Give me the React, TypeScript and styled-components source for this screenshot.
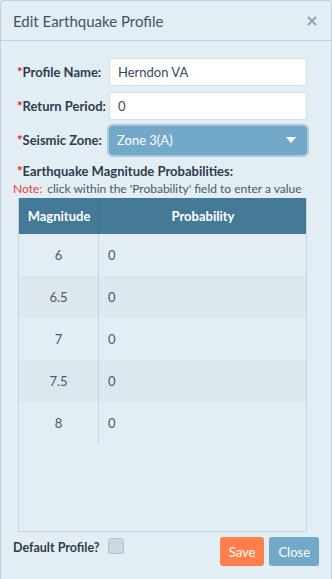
import React from 'react';
import styled, { createGlobalStyle } from 'styled-components';

const GlobalStyle = createGlobalStyle`
  body {
    margin: 0;
    font-family: Lato, 'Liberation Sans', sans-serif;
    background: #e3edf4;
  }
`;

const Dialog = styled.div`
  box-sizing: border-box;
  width: 332px;
  height: 579px;
  background: #e3edf4;
  border: 1px solid #c3d0d9;
  border-bottom: none;
  border-radius: 4px 4px 0 0;
  display: flex;
  flex-direction: column;
  color: #34495e;
`;

const Header = styled.div`
  height: 39px;
  display: flex;
  align-items: center;
  justify-content: space-between;
  padding: 0 12px 0 12px;
  border-bottom: 1px solid #c3d0d9;
`;

const Title = styled.h4`
  margin: 0;
  font-size: 15px;
  font-weight: 400;
  color: #3e5366;
`;

const CloseX = styled.button`
  border: none;
  background: none;
  padding: 0;
  width: 14px;
  height: 14px;
  display: flex;
  cursor: pointer;
`;

const Body = styled.div`
  flex: 1;
  display: flex;
  flex-direction: column;
  padding: 17px 24px 0 16px;
`;

const FieldRow = styled.div`
  display: flex;
  align-items: center;
  height: 28px;
  margin-bottom: 6px;
`;

const Label = styled.label`
  width: 92px;
  font-size: 13px;
  font-weight: 700;
  color: #2e3d4c;
  white-space: nowrap;
`;

const Star = styled.span`
  color: #e02020;
`;

const TextInput = styled.input`
  box-sizing: border-box;
  flex: 1;
  height: 28px;
  border: 1px solid #d6e0e6;
  border-radius: 3px;
  background: #fff;
  padding: 0 8px;
  font-family: inherit;
  font-size: 13px;
  color: #34495e;
`;

const Select = styled.div`
  box-sizing: border-box;
  flex: 1;
  height: 29px;
  border-radius: 4px;
  background: #73a9c8;
  box-shadow: 0 0 0 2px #a8c9dc;
  display: flex;
  align-items: center;
  justify-content: space-between;
  padding: 0 11px 0 8px;
  color: #fff;
  font-size: 13px;
`;

const Section = styled.div`
  margin-top: 3px;
  font-size: 13px;
  font-weight: 700;
  color: #2e3d4c;
`;

const Note = styled.div`
  font-size: 12px;
  color: #4a5a68;
  margin: 2px 0 0 -4px;
  white-space: nowrap;
`;

const NoteLabel = styled.span`
  color: #f03c3c;
  margin-right: 5px;
`;

const TableBox = styled.div`
  margin: 2px 0 0 1px;
  height: 333px;
  border: 1px solid #c8d5de;
  border-top: none;
  display: flex;
  flex-direction: column;
`;

const HeadRow = styled.div`
  display: grid;
  grid-template-columns: 80px 1fr;
  height: 36px;
  background: #447a98;
  color: #fff;
  font-size: 13px;
  font-weight: 700;
`;

const HeadCell = styled.div<{ first?: boolean }>`
  display: flex;
  align-items: center;
  justify-content: center;
  border-left: ${(p) => (p.first ? 'none' : '1px solid #3a6c88')};
`;

const Row = styled.div<{ alt: boolean }>`
  display: grid;
  grid-template-columns: 80px 1fr;
  height: 42px;
  background: ${(p) => (p.alt ? '#dce7ee' : 'transparent')};
  font-size: 13px;
  color: #4a5a68;
`;

const MagCell = styled.div`
  display: flex;
  align-items: center;
  justify-content: center;
  border-right: 1px solid #c8d5de;
`;

const ProbCell = styled.div`
  display: flex;
  align-items: center;
  padding-left: 9px;
`;

const Footer = styled.div`
  display: flex;
  align-items: center;
  margin: 5px -12px 0 -4px;
`;

const CheckLabel = styled.span`
  font-size: 12.5px;
  font-weight: 700;
  color: #2e3d4c;
  margin-right: 8px;
  margin-top: -9px;
`;

const Check = styled.span`
  box-sizing: border-box;
  width: 16px;
  height: 16px;
  border: 1px solid #b4c2cc;
  border-radius: 3px;
  background: #cdd8df;
  margin-top: -12px;
`;

const Spacer = styled.div`
  flex: 1;
`;

const Btn = styled.button<{ tone: 'save' | 'close' }>`
  height: 29px;
  border: none;
  border-radius: 3px;
  padding: 0 9px;
  margin-left: 5px;
  font-family: inherit;
  font-size: 13px;
  color: #fff;
  background: ${(p) => (p.tone === 'save' ? '#ff7f4c' : '#73a9c8')};
`;

const magnitudes = ['6', '6.5', '7', '7.5', '8'];

export default function App() {
  return (
    <>
      <GlobalStyle />
      <Dialog>
        <Header>
          <Title>Edit Earthquake Profile</Title>
          <CloseX aria-label="close">
            <svg width="14" height="14" viewBox="0 0 14 14">
              <path d="M3 3 L11 11 M11 3 L3 11" stroke="#8da0ae" strokeWidth="1.8" />
            </svg>
          </CloseX>
        </Header>
        <Body>
          <FieldRow>
            <Label>
              <Star>*</Star>Profile Name:
            </Label>
            <TextInput defaultValue="Herndon VA" />
          </FieldRow>
          <FieldRow>
            <Label>
              <Star>*</Star>Return Period:
            </Label>
            <TextInput defaultValue="0" />
          </FieldRow>
          <FieldRow>
            <Label>
              <Star>*</Star>Seismic Zone:
            </Label>
            <Select>
              <span>Zone 3(A)</span>
              <svg width="10" height="7" viewBox="0 0 10 7">
                <path d="M0 0 L10 0 L5 6 Z" fill="#fff" />
              </svg>
            </Select>
          </FieldRow>
          <Section>
            <Star>*</Star>Earthquake Magnitude Probabilities:
          </Section>
          <Note>
            <NoteLabel>Note:</NoteLabel>click within the 'Probability' field to enter a value
          </Note>
          <TableBox>
            <HeadRow>
              <HeadCell first>Magnitude</HeadCell>
              <HeadCell>Probability</HeadCell>
            </HeadRow>
            {magnitudes.map((m, i) => (
              <Row key={m} alt={i % 2 === 1}>
                <MagCell>{m}</MagCell>
                <ProbCell>0</ProbCell>
              </Row>
            ))}
          </TableBox>
          <Footer>
            <CheckLabel>Default Profile?</CheckLabel>
            <Check />
            <Spacer />
            <Btn tone="save">Save</Btn>
            <Btn tone="close">Close</Btn>
          </Footer>
        </Body>
      </Dialog>
    </>
  );
}
